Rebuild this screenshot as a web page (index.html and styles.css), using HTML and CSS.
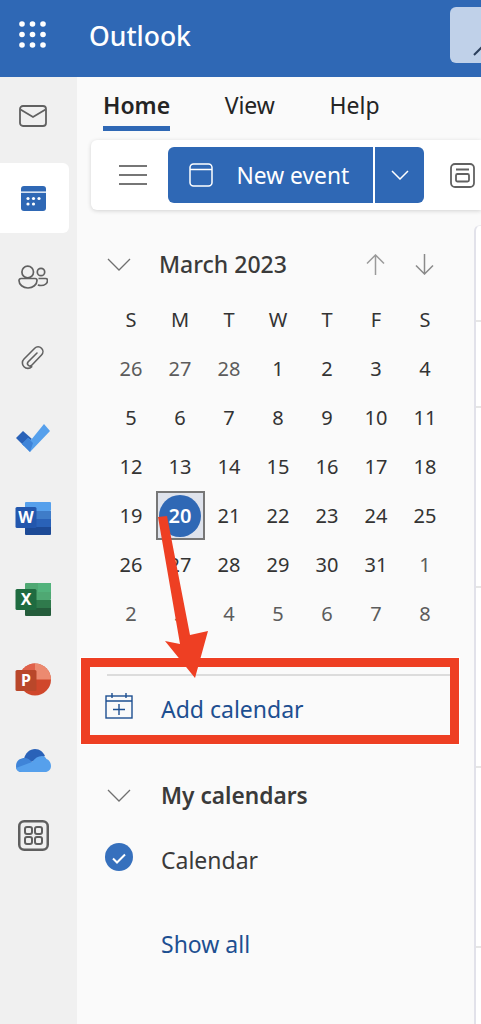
FILE: index.html
```html
<!DOCTYPE html>
<html lang="en">
<head>
    <meta charset="UTF-8">
    <meta name="viewport" content="width=device-width, initial-scale=1.0">
    <title>Outlook Calendar</title>
    <link rel="stylesheet" href="styles.css">
</head>
<body>

<div class="app">
    <!-- Top bar -->
    <header class="topbar">
        <svg class="waffle" width="27" height="27" viewBox="0 0 27 27" fill="#fff">
            <circle cx="3" cy="3" r="2.800"/><circle cx="13.500" cy="3" r="2.800"/><circle cx="24" cy="3" r="2.800"/>
            <circle cx="3" cy="13.500" r="2.800"/><circle cx="13.500" cy="13.500" r="2.800"/><circle cx="24" cy="13.500" r="2.800"/>
            <circle cx="3" cy="24" r="2.800"/><circle cx="13.500" cy="24" r="2.800"/><circle cx="24" cy="24" r="2.800"/>
        </svg>
        <span class="brand">Outlook</span>
        <div class="search-stub">
            <svg width="32" height="56" viewBox="0 0 32 56" fill="none" stroke="#2b3f5c" stroke-width="2"><path d="M24 48 L32 40"/></svg>
        </div>
    </header>

    <div class="workspace">
        <!-- App rail -->
        <nav class="rail">
            <div class="rail-item mail">
                <svg width="28" height="22" viewBox="0 0 28 22" fill="none" stroke="#616161" stroke-width="1.800">
                    <rect x="1" y="1" width="26" height="20" rx="3"/>
                    <path d="M1.500 4.500 L14 12 L26.500 4.500"/>
                </svg>
            </div>
            <div class="rail-item calendar">
                <svg width="25" height="25" viewBox="0 0 25 25">
                    <path fill="#2f68b5" d="M3 0h19a3 3 0 0 1 3 3v19a3 3 0 0 1-3 3H3a3 3 0 0 1-3-3V3a3 3 0 0 1 3-3z"/>
                    <rect y="5.500" width="25" height="1.300" fill="#fff"/>
                    <g fill="#fff">
                        <circle cx="7" cy="12.500" r="1.600"/><circle cx="12.500" cy="12.500" r="1.600"/><circle cx="18" cy="12.500" r="1.600"/>
                        <circle cx="7" cy="18" r="1.600"/><circle cx="12.500" cy="18" r="1.600"/>
                    </g>
                </svg>
            </div>
            <div class="rail-item people">
                <svg width="30" height="24" viewBox="0 0 30 24" fill="none" stroke="#616161" stroke-width="1.700">
                    <circle cx="9.700" cy="7" r="5.800"/>
                    <path d="M3 13.500h14a2 2 0 0 1 2 2c0 4-4 7.500-9 7.500S1 19.500 1 15.500a2 2 0 0 1 2-2z"/>
                    <circle cx="23" cy="7" r="3.700"/>
                    <path d="M20.500 13.500h7a2 2 0 0 1 2 2c0 3-3 5-6.500 5-1.200 0-2.200-.2-3.200-.5"/>
                </svg>
            </div>
            <div class="rail-item clip">
                <svg width="24" height="26" viewBox="0 0 24 26" fill="none" stroke="#616161" stroke-width="1.600" stroke-linecap="round">
                    <path d="M16 8L7 17a2.500 2.500 0 0 0 3.500 3.500L20.500 10a4.800 4.800 0 0 0-6.800-6.800L3 14a5.500 5.500 0 0 0 7.800 7.800"/>
                </svg>
            </div>
            <div class="rail-item">
                <svg width="36" height="28" viewBox="0 0 36 28">
                    <path fill="#2a62b8" d="M1 14 L8 7 L17 15 L9 22 Z"/>
                    <path fill="#56a0ec" d="M29 0 L35 7 L15 28 L7 20 L13 14 L16 16 Z"/>
                    <path fill="#3f84d8" d="M7 20 L13 14 L18 19 L15 28 Z"/>
                </svg>
            </div>
            <div class="rail-item">
                <svg width="36" height="33" viewBox="0 0 36 33">
                    <rect x="10" y="0" width="26" height="9" rx="1" fill="#56a0ec"/>
                    <rect x="10" y="9" width="26" height="8" fill="#3f7cc8"/>
                    <rect x="10" y="17" width="26" height="8" fill="#2a62b8"/>
                    <path d="M10 25h26v7a1 1 0 0 1-1 1H11a1 1 0 0 1-1-1z" fill="#1d4a96"/>
                    <rect x="0.500" y="5" width="21" height="21" rx="1.500" fill="#2357ad"/>
                    <text x="11" y="21" class="tile-letter" text-anchor="middle">W</text>
                </svg>
            </div>
            <div class="rail-item">
                <svg width="36" height="33" viewBox="0 0 36 33">
                    <rect x="10" y="0" width="26" height="17" rx="1" fill="#4fa873"/>
                    <rect x="23" y="0" width="13" height="9" fill="#52b37c"/>
                    <rect x="10" y="17" width="26" height="8" fill="#2f7a4c"/>
                    <path d="M10 25h26v7a1 1 0 0 1-1 1H11a1 1 0 0 1-1-1z" fill="#245c3b"/>
                    <rect x="0.500" y="6" width="21" height="21" rx="1.500" fill="#1f6b40"/>
                    <text x="11" y="22" class="tile-letter" text-anchor="middle">X</text>
                </svg>
            </div>
            <div class="rail-item">
                <svg width="36" height="33" viewBox="0 0 36 33">
                    <circle cx="20" cy="16.500" r="16" fill="#d0472b"/>
                    <path d="M20 16.500V.5a16 16 0 0 1 16 16z" fill="#ec8a70"/>
                    <path d="M20 .5a16 16 0 0 0-16 16h16z" fill="#e0614a"/>
                    <rect x="0.500" y="7" width="21" height="21" rx="1.500" fill="#b9472a"/>
                    <text x="11" y="23" class="tile-letter" text-anchor="middle">P</text>
                </svg>
            </div>
            <div class="rail-item">
                <svg width="35" height="23" viewBox="0 0 35 23">
                    <path fill="#2a62b8" d="M8 10C9 4 14 0 19 0c5 0 8 3 10 7l-9 5-12 2z"/>
                    <path fill="#3f84d8" d="M0 17c0-5 3.500-8 9-8 2 0 4 1 6 3l7 11H6c-4 0-6-2-6-6z"/>
                    <path fill="#56a0ec" d="M0 19l16-6c3-4 6-6 10-6 2 0 3.500 1 4.500 3C33.500 11 35 14 35 17c0 3.500-2.500 6-6 6H6c-3 0-5-1.500-6-4z"/>
                </svg>
            </div>
            <div class="rail-item apps">
                <svg width="31" height="31" viewBox="0 0 31 31" fill="none" stroke="#5f5f5f">
                    <rect x="1.250" y="1.250" width="28.500" height="28.500" rx="5" stroke-width="2.500"/>
                    <g stroke-width="2">
                        <rect x="7" y="7" width="7" height="7" rx="2"/><rect x="17" y="7" width="7" height="7" rx="2"/>
                        <rect x="7" y="17" width="7" height="7" rx="2"/><rect x="17" y="17" width="7" height="7" rx="2"/>
                    </g>
                </svg>
            </div>
        </nav>

        <main class="content">
            <!-- Tabs -->
            <div class="tabs">
                <span class="tab selected">Home</span>
                <span class="tab">View</span>
                <span class="tab">Help</span>
            </div>

            <!-- Ribbon -->
            <div class="ribbon">
                <svg class="hamburger" width="28" height="20" viewBox="0 0 28 20" stroke="#4a4a4a" stroke-width="1.500"><path d="M0 1h28M0 10h28M0 19h28"/></svg>
                <div class="split-button">
                    <button class="new-event">
                        <svg width="24" height="24" viewBox="0 0 24 24" fill="none" stroke="#fff" stroke-width="1.500">
                            <rect x="1" y="1" width="22" height="22" rx="3.500"/>
                            <path d="M1 6.500h22"/>
                        </svg>
                        <span>New event</span>
                    </button>
                    <button class="new-event-more">
                        <svg width="18" height="10" viewBox="0 0 18 10" fill="none" stroke="#fff" stroke-width="1.500"><path d="M1 1l8 8 8-8"/></svg>
                    </button>
                </div>
                <svg class="day-view" width="25" height="25" viewBox="0 0 25 25" fill="none" stroke="#616161" stroke-width="1.800">
                    <rect x="1" y="1" width="23" height="23" rx="4"/>
                    <path d="M6 6.500h13"/>
                    <rect x="6" y="11" width="13" height="7.500" rx="1.500"/>
                </svg>
            </div>

            <div class="panes">
                <aside class="side">
                    <!-- Month header -->
                    <div class="month-head">
                        <svg class="chevron" width="24" height="13" viewBox="0 0 24 13" fill="none" stroke="#707070" stroke-width="1.300"><path d="M1 1l11 11L23 1"/></svg>
                        <span class="month-title">March 2023</span>
                        <div class="month-arrows">
                            <svg width="19" height="21" viewBox="0 0 19 21" fill="none" stroke="#9a9a9a" stroke-width="1.500"><path d="M9.500 21V1M1 9.500l8.500-8.500 8.500 8.500"/></svg>
                            <svg width="19" height="21" viewBox="0 0 19 21" fill="none" stroke="#8a8a8a" stroke-width="1.500"><path d="M9.500 0v20M1 11.500l8.500 8.500 8.500-8.500"/></svg>
                        </div>
                    </div>

                    <!-- Month grid -->
                    <div class="month-grid" id="monthGrid"></div>

                    <hr class="divider">

                    <div class="add-calendar">
                        <svg width="28" height="26" viewBox="0 0 28 26" fill="none" stroke="#1d4f91" stroke-width="1.400">
                            <rect x="1" y="3" width="26" height="22"/>
                            <path d="M1 8h26M7 0v5M21 0v5M14 11v11M8 16.500h12"/>
                        </svg>
                        <span>Add calendar</span>
                    </div>

                    <div class="my-calendars">
                        <svg class="chevron" width="24" height="13" viewBox="0 0 24 13" fill="none" stroke="#707070" stroke-width="1.300"><path d="M1 1l11 11L23 1"/></svg>
                        <span>My calendars</span>
                    </div>

                    <div class="calendar-row">
                        <svg width="28" height="28" viewBox="0 0 28 28">
                            <circle cx="14" cy="14" r="14" fill="#3670bd"/>
                            <path d="M8 15.500l4 4 8-8" fill="none" stroke="#fff" stroke-width="2"/>
                        </svg>
                        <span>Calendar</span>
                    </div>

                    <a class="show-all">Show all</a>
                </aside>

                <!-- Agenda column, cut off by the screenshot -->
                <section class="agenda">
                    <div class="slot first"></div>
                    <div class="slot second"></div>
                    <div class="slot"></div>
                    <div class="slot"></div>
                    <div class="slot"></div>
                </section>
            </div>
        </main>
    </div>

    <!-- Annotation drawn over the screenshot -->
    <div class="callout-box"></div>
    <svg class="callout-arrow" width="52" height="163" viewBox="0 0 52 163">
        <path d="M1 1 L10 0 L33 119 L51 115 L38 162 L8 125 L23 128 Z" fill="#ee3f23"/>
    </svg>
</div>

<script>
    const monthGrid = document.getElementById('monthGrid');
    const weekDays = ['S', 'M', 'T', 'W', 'T', 'F', 'S'];
    const days = [26, 27, 28, 1, 2, 3, 4, 5, 6, 7, 8, 9, 10, 11, 12, 13, 14, 15, 16, 17, 18,
        19, 20, 21, 22, 23, 24, 25, 26, 27, 28, 29, 30, 31, 1, 2, 3, 4, 5, 6, 7, 8];

    weekDays.forEach((name) => {
        const cell = document.createElement('div');
        cell.classList.add('cell', 'weekday');
        cell.textContent = name;
        monthGrid.appendChild(cell);
    });

    days.forEach((day, index) => {
        const cell = document.createElement('div');
        cell.classList.add('cell');
        if (index < 3 || index > 33) cell.classList.add('other-month');
        if (index === 22) {
            cell.classList.add('today');
            cell.innerHTML = `<span>${day}</span>`;
        } else {
            cell.textContent = day;
        }
        monthGrid.appendChild(cell);
    });
</script>

</body>
</html>
```

FILE: styles.css
```css
* {
    box-sizing: border-box;
}

html, body {
    margin: 0;
    padding: 0;
    height: 100%;
    overflow: hidden;
}

body {
    font-family: 'Noto Sans', 'Open Sans', sans-serif;
    color: #333;
    background: #fafafa;
}

.app {
    position: relative;
    display: flex;
    flex-direction: column;
    height: 1024px;
}

/* Top bar */
.topbar {
    flex: 0 0 77px;
    display: flex;
    align-items: center;
    background-color: #2f68b5;
    padding: 0 0 6px 19px;
    overflow: hidden;
}

.waffle {
    margin-top: -3px;
}

.brand {
    margin-left: 43px;
    color: #fff;
    font-size: 26.500px;
    font-weight: 500;
}

.search-stub {
    align-self: flex-start;
    margin: 7px -10px 0 auto;
    width: 41px;
    height: 56px;
    background: #c0d1e9;
    border-radius: 6px 0 0 6px;
}

.workspace {
    flex: 1;
    display: flex;
    min-height: 0;
}

/* App rail */
.rail {
    flex: 0 0 77px;
    background: #f0f0f0;
    display: flex;
    flex-direction: column;
}

.rail-item {
    width: 66px;
    height: 80.500px;
    flex-shrink: 0;
    display: flex;
    align-items: center;
    justify-content: center;
}

.rail-item.mail {
    height: 78px;
    margin-bottom: 8px;
}

.rail-item.calendar {
    width: 69px;
    height: 70px;
    padding-right: 3px;
    margin-bottom: 3.750px;
    background: #fff;
    border-radius: 0 6px 6px 0;
}

.rail-item.apps {
    margin-top: -5.500px;
}

.content {
    flex: 1;
    min-width: 0;
    display: flex;
    flex-direction: column;
}

/* Tabs */
.tabs {
    flex: 0 0 55px;
    display: flex;
    gap: 54.500px;
    padding-left: 26px;
    font-size: 23px;
    color: #242424;
}

.tab {
    height: 54px;
    padding-top: 10px;
    line-height: 36px;
}

.tab.selected {
    font-weight: 600;
    border-bottom: 5px solid #2f68b5;
}

/* Ribbon */
.ribbon {
    margin: 8px 0 0 14px;
    height: 70px;
    display: flex;
    align-items: center;
    background: #fff;
    border-radius: 6px 0 0 6px;
    box-shadow: 0 1px 4px rgba(0, 0, 0, 0.16);
    overflow: hidden;
}

.hamburger {
    margin-left: 28px;
}

.split-button {
    display: flex;
    margin-left: 21px;
    height: 56px;
}

.split-button button {
    border: none;
    background: #2f68b5;
    color: #fff;
    font-family: inherit;
    display: flex;
    align-items: center;
}

.split-button .new-event {
    width: 205px;
    padding-left: 21px;
    gap: 23.500px;
    font-size: 22.800px;
    border-radius: 6px 0 0 6px;
}

.split-button .new-event-more {
    width: 49px;
    margin-left: 2px;
    justify-content: center;
    border-radius: 0 6px 6px 0;
}

.day-view {
    margin-left: 26px;
    flex-shrink: 0;
}

/* Below the ribbon */
.panes {
    flex: 1;
    display: flex;
    min-height: 0;
}

.side {
    flex: 0 0 397px;
    padding-left: 27px;
}

.agenda {
    flex: 1;
    margin-top: 15px;
    background: #fff;
    border-left: 2px solid #e2e2ea;
    border-top: 1px solid #ececf0;
    border-radius: 6px 0 0 0;
}

.slot {
    height: 180px;
    border-bottom: 2px solid #e6e6e6;
}

.slot.first { height: 96px; }
.slot.second { height: 86px; }

.month-head {
    display: flex;
    align-items: center;
    height: 50px;
    margin-top: 29px;
}

.chevron {
    flex-shrink: 0;
    margin-left: 3px;
}

.month-title {
    margin-left: 28px;
    font-size: 23px;
    font-weight: 500;
    color: #3a3a3a;
}

.month-arrows {
    margin-left: auto;
    margin-right: 40px;
    display: flex;
    gap: 30px;
}

.month-grid {
    width: 343px;
    margin-left: 2.500px;
    margin-top: 6px;
    display: grid;
    grid-template-columns: repeat(7, 49px);
    grid-auto-rows: 49px;
}

.cell {
    display: flex;
    align-items: center;
    justify-content: center;
    font-size: 20px;
    color: #333;
}

.cell.other-month {
    color: #5c5c5c;
}

.cell.today {
    background: #dfe3ec;
    border: 2px solid #777;
}

.cell.today span {
    width: 42px;
    flex-shrink: 0;
    height: 42px;
    border-radius: 50%;
    background: #2f68b5;
    color: #fff;
    font-weight: 600;
    display: flex;
    align-items: center;
    justify-content: center;
}

.divider {
    margin: 36px 0 0 3px;
    width: 343px;
    border: none;
    border-top: 2px solid #dcdcdc;
}

.add-calendar {
    display: flex;
    align-items: center;
    gap: 28px;
    height: 66px;
    color: #1d4f91;
    font-size: 23px;
}

.add-calendar svg,
.calendar-row svg {
    margin: -6px 0 0 1px;
}

.my-calendars {
    display: flex;
    align-items: center;
    gap: 30px;
    height: 50px;
    margin-top: 28px;
    font-size: 22.700px;
    font-weight: 600;
    color: #3a3a3a;
}

.calendar-row {
    display: flex;
    align-items: center;
    gap: 28px;
    height: 50px;
    margin-top: 15px;
    font-size: 23px;
    color: #3a3a3a;
}

.show-all {
    display: block;
    margin: 43px 0 0 57px;
    font-size: 23px;
    color: #1d4f91;
}

/* Annotation layer */
.callout-box {
    position: absolute;
    left: 81px;
    top: 658px;
    width: 378px;
    height: 86px;
    border: 9px solid #ee3f23;
    box-shadow: 0 0 0 1px #fff;
}

.callout-arrow {
    position: absolute;
    left: 157px;
    top: 516px;
}

.tile-letter {
    font-family: 'Noto Sans', sans-serif;
    font-size: 16px;
    font-weight: 700;
    fill: #fff;
}
```
